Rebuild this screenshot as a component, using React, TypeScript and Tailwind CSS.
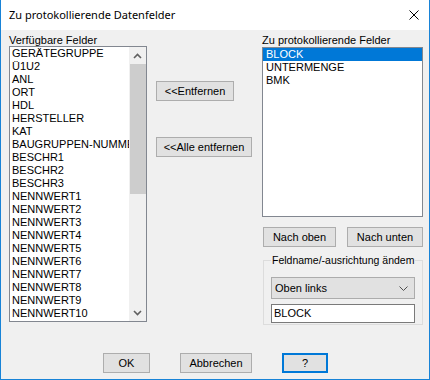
import React from "react";

const available = [
  "GERÄTEGRUPPE",
  "Ü1U2",
  "ANL",
  "ORT",
  "HDL",
  "HERSTELLER",
  "KAT",
  "BAUGRUPPEN-NUMMER",
  "BESCHR1",
  "BESCHR2",
  "BESCHR3",
  "NENNWERT1",
  "NENNWERT2",
  "NENNWERT3",
  "NENNWERT4",
  "NENNWERT5",
  "NENNWERT6",
  "NENNWERT7",
  "NENNWERT8",
  "NENNWERT9",
  "NENNWERT10",
];

const logged = ["BLOCK", "UNTERMENGE", "BMK"];

const ui = { fontFamily: '"Liberation Sans", Arial, sans-serif' };

function Btn({ label, w, focused }: { label: string; w: string; focused?: boolean }) {
  return (
    <button
      className={`${w} h-[20px] flex items-center justify-center bg-[#e1e1e1] text-[11px] text-black leading-none ${
        focused ? "border-2 border-[#0078d7]" : "border border-[#adadad]"
      }`}
    >
      {label}
    </button>
  );
}

function Chevron({ up }: { up?: boolean }) {
  return (
    <svg width="9" height="6" viewBox="0 0 9 6">
      <path
        d={up ? "M1 5 L4.5 1.5 L8 5" : "M1 1 L4.5 4.5 L8 1"}
        fill="none"
        stroke="#606060"
        strokeWidth="1.6"
      />
    </svg>
  );
}

export default function App() {
  return (
    <div
      className="w-[430px] h-[380px] flex flex-col bg-[#f0f0f0] border-x border-b border-[#1883d7] text-black"
      style={ui}
    >
      {/* Title bar */}
      <div className="h-[30px] shrink-0 bg-white flex items-center justify-between pl-[8px] pr-[10px]">
        <span className="text-[11px]" style={{ fontFamily: '"Noto Sans", "Open Sans", sans-serif' }}>
          Zu protokollierende Datenfelder
        </span>
        <svg width="10" height="10" viewBox="0 0 10 10">
          <path d="M0.5 0.5 L9.5 9.5 M9.5 0.5 L0.5 9.5" stroke="#000" strokeWidth="1" />
        </svg>
      </div>

      {/* Body */}
      <div className="flex flex-col flex-1">
        <div className="flex pl-[8px] pt-[4px]">
          {/* Available fields */}
          <div className="w-[138px] flex flex-col">
            <div className="h-[12px] text-[11px] leading-[12px] whitespace-nowrap">Verfügbare Felder</div>
            <div className="h-[276px] border border-[#828790] bg-white flex overflow-hidden">
              <div className="flex-1 overflow-hidden pl-[2px]">
                {available.map((f) => (
                  <div key={f} className="h-[13px] text-[11px] leading-[13px] whitespace-nowrap">
                    {f}
                  </div>
                ))}
              </div>
              <div className="w-[17px] shrink-0 bg-[#f0f0f0] flex flex-col">
                <div className="h-[17px] flex items-center justify-center">
                  <Chevron up />
                </div>
                <div className="h-[130px] ml-px bg-[#cdcdcd]" />
                <div className="flex-1" />
                <div className="h-[17px] flex items-center justify-center">
                  <Chevron />
                </div>
              </div>
            </div>
          </div>

          {/* Middle buttons */}
          <div className="ml-[9px] w-[96px] flex flex-col pt-[47px] gap-[36px]">
            <Btn label="<<Entfernen" w="w-[78px]" />
            <Btn label="<<Alle entfernen" w="w-[96px]" />
          </div>

          {/* Logged fields */}
          <div className="ml-[10px] w-[161px] flex flex-col">
            <div className="h-[13px] text-[11px] leading-[12px] whitespace-nowrap">Zu protokollierende Felder</div>
            <div className="h-[170px] border border-[#828790] bg-white">
              {logged.map((f, i) => (
                <div
                  key={f}
                  className={`h-[13px] text-[11px] leading-[13px] pl-[3px] whitespace-nowrap ${
                    i === 0 ? "bg-[#0078d7] text-white" : ""
                  }`}
                >
                  {f}
                </div>
              ))}
            </div>
            <div className="flex justify-between ml-px mt-[10px]">
              <Btn label="Nach oben" w="w-[73px]" />
              <Btn label="Nach unten" w="w-[76px]" />
            </div>
            <fieldset className="ml-px mt-[7px] w-[160px] border border-[#dcdcdc] px-[7px] pb-[1px]">
              <legend className="text-[10.5px] leading-[12px] px-px ml-0 whitespace-nowrap">
                Feldname/-ausrichtung ändem
              </legend>
              <div className="mt-[11px] h-[22px] border border-[#acacac] bg-[#e1e1e1] flex items-center justify-between pl-[3px] pr-[6px] text-[11px]">
                <span>Oben links</span>
                <svg width="9" height="5" viewBox="0 0 9 5">
                  <path d="M0.5 0.5 L4.5 4.5 L8.5 0.5" fill="none" stroke="#505050" strokeWidth="1" />
                </svg>
              </div>
              <div className="mt-[5px] h-[19px] border border-[#7a7a7a] bg-white flex items-center pl-[2px] text-[11px]">
                BLOCK
              </div>
            </fieldset>
          </div>
        </div>

        {/* Dialog buttons */}
        <div className="flex gap-[30px] ml-[102px] mt-[28px]">
          <Btn label="OK" w="w-[47px]" />
          <Btn label="Abbrechen" w="w-[72px]" />
          <Btn label="?" w="w-[46px]" focused />
        </div>
      </div>
    </div>
  );
}
